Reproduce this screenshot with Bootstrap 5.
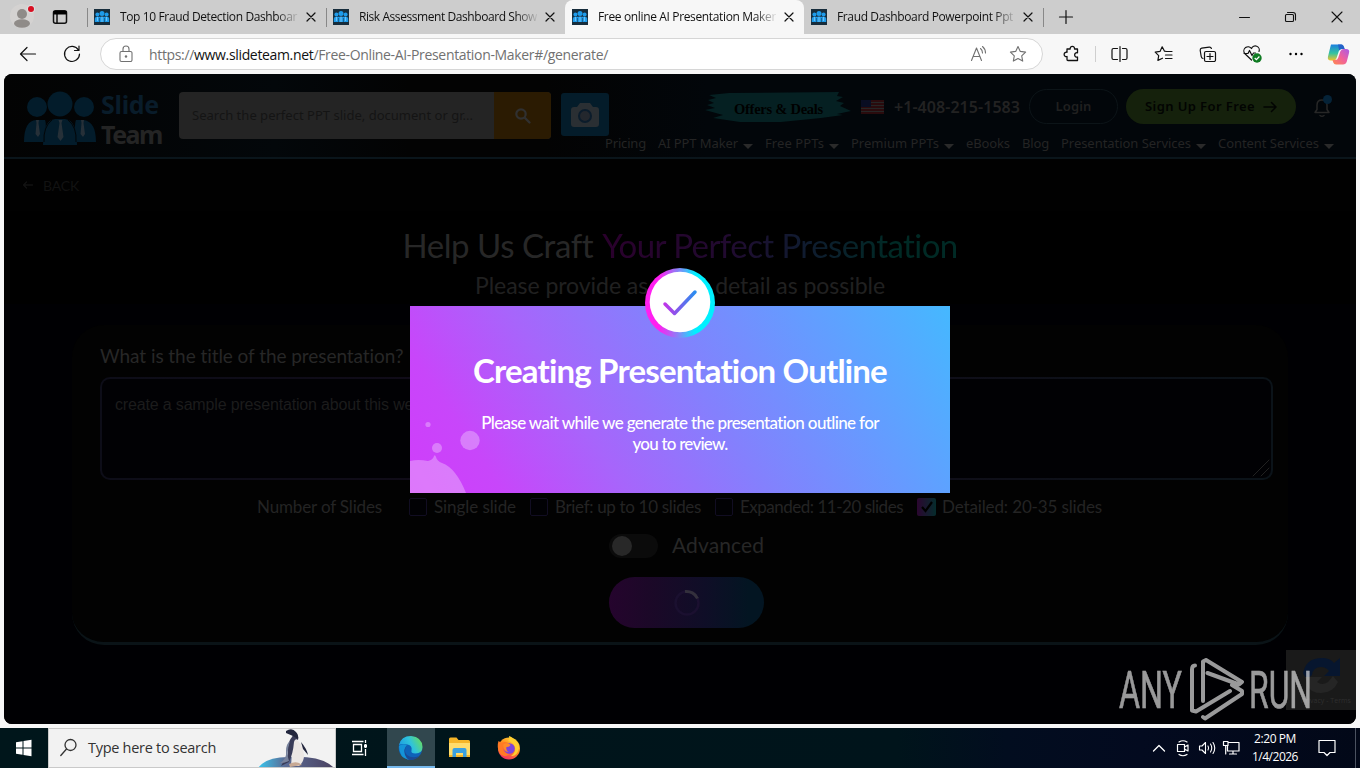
<!DOCTYPE html>
<html lang="en">
<head>
  <meta charset="UTF-8">
  <title>Free online AI Presentation Maker</title>
  <link href="https://cdn.jsdelivr.net/npm/bootstrap@5.3.0/dist/css/bootstrap.min.css" rel="stylesheet">
  <style>
    body {
      width: 1360px;
      height: 768px;
      overflow: hidden;
      background: #f7f7f7;
      font-family: "Open Sans", sans-serif;
      font-size: 12px;
      color: #111;
    }
    svg { display: block; flex: none; }
    .ln { fill: none; stroke: currentColor; stroke-linecap: round; stroke-linejoin: round; }
    [data-w] { display: inline-block; white-space: nowrap; flex: none; }

    /* browser window */
    .tabstrip { height: 34px; background: #cdcdcd; }
    .tabstrip .lead-icons { width: 87px; }
    .tab { width: 239px; height: 34px; padding-left: 6px; border-left: 1px solid transparent; position: relative; }
    .tab.sep::before { content: ""; position: absolute; left: -1px; top: 8px; width: 1px; height: 19px; background: #888; }
    .tab.current { background: #f7f7f7; border-radius: 8px 8px 0 0; }
    .tab.last { width: 46px; }
    .tab-text {
      width: 178px; margin-left: 10px; overflow: hidden; white-space: nowrap;
      -webkit-mask-image: linear-gradient(90deg, #000 156px, transparent 180px);
      mask-image: linear-gradient(90deg, #000 156px, transparent 180px);
    }
    .tab-close { margin-left: 8px; }
    .toolbar { height: 40px; padding-left: 6px; }
    .cell { width: 44px; height: 40px; flex: none; }
    .address { width: 943px; height: 32px; margin: 0 6px; border: 1px solid #d6d6d6; color: #717171; font-size: 14px; }
    .address b { font-weight: 400; color: #111; }
    .address .aloud { margin-right: 22px; }
    .address .star { margin-right: 15px; }
    .bar-sep { width: 1px; height: 16px; margin: 0 2px 0 2px; background: #cfcfcf; }

    /* page */
    .viewport { width: 1352px; height: 650px; margin: 0 4px 4px; border-radius: 8px; overflow: hidden; background: #000; color: #272727; }
    .site-head { height: 85px; padding-left: 20px; background: linear-gradient(90deg, #030303, #03070a 20%, #030303 30%, #030303 40%, #02060a 52%); border-bottom: 2px solid #0a151b; font-family: "Noto Sans", sans-serif; }
    .brand { margin-top: 17px; width: 138px; line-height: 30px; font-size: 25px; font-weight: 700; }
    .brand .words { margin-top: -2px; }
    .brand .top-word { color: #091c2a; }
    .brand .low-word { color: #242424; }
    .finder { width: 372px; height: 47px; margin: 18px 10px 0 17px; border-radius: 4px; overflow: hidden; background: #242424; }
    .finder .hint { width: 315px; padding-left: 13px; font-size: 13px; color: #141414; }
    .finder .go { background: #2b1b02; color: #303030; }
    .cam { width: 48px; height: 43px; margin-top: 19px; border-radius: 3px; background: #041c2a; }
    .head-right { width: 740px; margin-left: -4px; padding-top: 15px; }
    .head-top { height: 35px; padding-left: 100px; }
    .offers { width: 146px; height: 32px; margin-right: 10px; position: relative; }
    .offers span { position: absolute; left: 29px; top: 8px; line-height: 20px; font-family: "Liberation Serif", serif; font-size: 14.5px; font-weight: 700; color: #000; }
    .phone { margin: 0 9px 0 10px; font-size: 16px; font-weight: 600; color: #222; }
    .pill { height: 35px; border-radius: 18px; font-weight: 600; font-size: 13px; }
    .login { width: 89px; margin-right: 8px; border: 1px solid #0c1418; color: #202020; }
    .signup { width: 170px; margin-right: 17px; background: #15210c; color: #020402; }
    .head-nav { height: 20px; margin-top: 10px; gap: 12px; font-size: 13px; color: #242424; }
    .drop::after { content: ""; display: inline-block; margin-left: 5px; vertical-align: -1px; border: 5px solid transparent; border-top-color: #2a2a2a; border-bottom: 0; }

    .content { font-family: Lato, sans-serif; }
    .back { height: 52px; padding-left: 17px; font-size: 14px; color: #121212; background: #010101; }
    .headline { height: 44px; margin-top: 12px; font-size: 33px; line-height: 44px; gap: 9px; font-weight: 400; }
    .tinted { background: linear-gradient(90deg, #2a002c, #210a30 35%, #111a30 55%, #002a25 82%); -webkit-background-clip: text; background-clip: text; color: transparent; }
    .subline { height: 37px; line-height: 36px; font-size: 23px; text-align: center; color: #202020; }
    .lower { background: #000003; padding: 21px 0 0 68px; height: 420px; }
    .maker { width: 1216px; height: 320px; padding: 16px 15px 0 28px; border-radius: 32px; background: #020202; border-bottom: 3px solid #0a1317; }
    .ask { height: 28px; line-height: 29px; font-size: 19px; }
    .answer { height: 103px; margin-top: 8px; padding: 14px 13px; border: 2px solid transparent; border-radius: 10px; font: 16px/24px "Liberation Sans", sans-serif; color: #1c1c1c;
      background: linear-gradient(#010104, #010104) padding-box, linear-gradient(90deg, #0d0d18, #120a18 50%, #0b1319) border-box; }
    .grip { right: 1px; bottom: 1px; color: #222; }
    .choices { height: 24px; margin: 15px 14px 0 0; font-size: 17px; color: #242424; }
    .box { width: 18px; height: 18px; border: 1px solid #110d22; border-radius: 2px; margin: 0 7px 0 14px; background: #010104; flex: none; }
    .box.first { margin-left: 27px; }
    .box.on { width: 19px; margin-right: 6px; border: 0; background: linear-gradient(90deg, #2b0630, #052c2c); }
    .adv { height: 24px; margin-top: 15px; gap: 14px; font-size: 21px; line-height: 22px; }
    .adv [data-w] { margin-top: -2px; }
    .toggle { width: 49px; height: 24px; padding: 2px 3px; border-radius: 12px; background: #0b0b0b; }
    .toggle i { display: block; width: 20px; height: 20px; border-radius: 50%; background: #282828; }
    .make { width: 155px; height: 51px; margin: 19px auto 0; border-radius: 26px; background: linear-gradient(90deg, #25042d, #1c0828 25%, #0f0e27 62%, #031522 90%); }

    /* notice over the page */
    .notice { left: 406px; top: 232px; width: 540px; height: 187px; padding-top: 42px; color: #fff; font-family: Lato, sans-serif;
      background: linear-gradient(57deg, #d03dfa 0%, #c846fa 14%, #a765fb 33%, #8480fd 54%, #659bff 76%, #45b8ff 100%); }
    .notice .big { font-size: 33px; line-height: 44px; font-weight: 700; }
    .notice .note { margin-top: 20px; font-size: 17px; line-height: 21px; font-weight: 500; }
    .ring { left: 235px; top: -38px; }
    .splash { left: 0; bottom: 0; }
    .recaptcha { right: 0; top: 576px; width: 70px; height: 60px; background: #1a1a1a; }
    .recaptcha small { position: absolute; left: 15px; top: 46px; font-size: 7px; color: #2f2f2f; white-space: nowrap; }
    .stamp { left: 1112px; top: 582px; opacity: .6; }

    /* taskbar */
    .taskbar { height: 40px; background: linear-gradient(90deg, #00161b, #00141b 66%, #020d1f 74%, #030a1f 84%, #020818); color: #fff; }
    .tb48 { width: 48px; height: 40px; flex: none; }
    .search { width: 288px; height: 40px; padding-left: 11px; background: #f2f2f2; border: 1px solid #c9c9c9; color: #333; font-size: 14.5px; }
    .edge-slot { width: 48px; margin-left: 3px; background: #31474e; border-bottom: 2px solid #76b9ed; }
    .tray { gap: 8px; }
    .tray svg { overflow: visible; }
    .clock { width: 64px; font-size: 12px; line-height: 18px; margin: 0 3px 0 -4px; }
    .desk-edge { width: 1px; height: 40px; margin-left: 11px; margin-right: 4px; background: #4b5260; }
  </style>
</head>
<body>

<!-- shared drawings -->
<svg width="0" height="0" class="position-absolute">
  <defs>
    <symbol id="fav" viewBox="0 0 16 16">
      <rect width="16" height="16" fill="#172d3c"/>
      <g fill="#1e9bea"><circle cx="8" cy="4.500" r="2.500"/><circle cx="3.400" cy="5.500" r="2"/><circle cx="12.600" cy="5.500" r="2"/><path d="M.8 13V9.800q0-2 2.200-2h10q2.200 0 2.200 2V13z"/></g>
      <path d="M3.400 8v4M8 7.500V13M12.600 8v4" stroke="#8bd0fa" stroke-width=".8"/>
      <path d="M5.500 9v5M10.500 9v5" stroke="#172d3c" stroke-width=".5"/>
    </symbol>
    <symbol id="x" viewBox="0 0 10 10"><path class="ln" stroke-width="1.200" d="M1 1l8 8M9 1L1 9"/></symbol>
    <linearGradient id="gTick" x1="0" x2="1"><stop offset="0" stop-color="#c035e8"/><stop offset="1" stop-color="#2a8df0"/></linearGradient>
    <linearGradient id="gRing" x1="0" x2="1"><stop offset=".2" stop-color="#ff1ff0"/><stop offset=".5" stop-color="#7c8df8"/><stop offset=".72" stop-color="#00f0ff"/></linearGradient>
    <linearGradient id="gCopA" x1="0" y1="0" x2="0" y2="1"><stop offset="0" stop-color="#1a7fe0"/><stop offset=".55" stop-color="#35c3a0"/><stop offset="1" stop-color="#f3c32c"/></linearGradient>
    <linearGradient id="gCopB" x1="1" y1="0" x2="0" y2="1"><stop offset="0" stop-color="#a85be8"/><stop offset=".5" stop-color="#f0609c"/><stop offset="1" stop-color="#ff8a4c"/></linearGradient>
    <linearGradient id="gEdge" x1="0" y1=".6" x2="1" y2=".2"><stop offset="0" stop-color="#1c9be0"/><stop offset=".5" stop-color="#2fc3dc"/><stop offset="1" stop-color="#6ade59"/></linearGradient>
    <linearGradient id="gFox" x1=".8" y1="0" x2=".2" y2="1"><stop offset="0" stop-color="#ffe03a"/><stop offset=".45" stop-color="#ff8a1f"/><stop offset="1" stop-color="#f2246b"/></linearGradient>
    <linearGradient id="gIce" x1="0" x2="1"><stop offset="0" stop-color="#38c6ee"/><stop offset=".35" stop-color="#5a6c96"/><stop offset="1" stop-color="#4b4160"/></linearGradient>
  </defs>
</svg>

<!-- Tabs -->
<div class="tabstrip d-flex align-items-center">
  <div class="lead-icons d-flex align-items-center">
    <svg width="44" height="34"><circle cx="22" cy="16" r="12" fill="#d4d2d1"/><circle cx="22" cy="14" r="5" fill="#8f8b88"/><ellipse cx="22" cy="23.500" rx="8" ry="4.200" fill="#8f8b88"/><circle cx="31" cy="9" r="4" fill="#dedede"/><circle cx="31" cy="9" r="3" fill="#d80f22"/></svg>
    <svg width="32" height="34"><path class="ln" stroke-width="1.500" d="M11.500 10.700h9a2 2 0 0 1 2 2v8.600a2 2 0 0 1-2 2h-9a2 2 0 0 1-2-2v-8.600a2 2 0 0 1 2-2zM13 14v9"/><path d="M9.500 11h13v3.500h-13z"/></svg>
  </div>
  <div class="tab sep d-flex align-items-center"><svg width="16" height="16"><use href="#fav"/></svg><div class="tab-text"><span data-w="177">Top 10 Fraud Detection Dashboar</span></div><svg class="tab-close" width="10" height="10"><use href="#x"/></svg></div>
  <div class="tab sep d-flex align-items-center"><svg width="16" height="16"><use href="#fav"/></svg><div class="tab-text"><span data-w="178">Risk Assessment Dashboard Show</span></div><svg class="tab-close" width="10" height="10"><use href="#x"/></svg></div>
  <div class="tab current d-flex align-items-center"><svg width="16" height="16"><use href="#fav"/></svg><div class="tab-text"><span data-w="178">Free online AI Presentation Maker</span></div><svg class="tab-close" width="10" height="10"><use href="#x"/></svg></div>
  <div class="tab d-flex align-items-center"><svg width="16" height="16"><use href="#fav"/></svg><div class="tab-text"><span data-w="176">Fraud Dashboard Powerpoint Ppt</span></div><svg class="tab-close" width="10" height="10"><use href="#x"/></svg></div>
  <div class="tab sep last d-flex align-items-center"><svg class="ms-2" width="16" height="16"><path class="ln" stroke-width="1.200" d="M8 1.500v13M1.500 8h13"/></svg></div>
  <div class="d-flex align-items-center ms-auto">
    <svg width="46" height="34"><path class="ln" stroke-width="1" d="M17.500 17.500h10"/></svg>
    <svg width="46" height="34"><path class="ln" stroke-width="1.100" d="M18.500 14.500h6a1 1 0 0 1 1 1v5a1 1 0 0 1-1 1h-6a1 1 0 0 1-1-1v-5a1 1 0 0 1 1-1zM19.500 12.500h5.500a2.500 2.500 0 0 1 2.500 2.500v5"/></svg>
    <svg width="46" height="34"><path class="ln" stroke-width="1.100" d="M18 12l10 10M28 12l-10 10"/></svg>
  </div>
</div>

<!-- Toolbar -->
<div class="toolbar d-flex align-items-center">
  <svg class="cell"><path class="ln" stroke-width="1.200" d="M29.500 20h-15M21 13.500L14.500 20l6.500 6.500"/></svg>
  <svg class="cell"><path class="ln" stroke-width="1.200" d="M28.500 16.200A7.500 7.500 0 1 0 29.500 20M29 12v4.500h-4.500"/></svg>
  <div class="address d-flex align-items-center rounded-pill bg-white">
    <svg width="48" height="30"><path class="ln" stroke-width="1.100" d="M20.500 12.500h9a1.500 1.500 0 0 1 1.500 1.500v7a1.500 1.500 0 0 1-1.500 1.500h-9a1.500 1.500 0 0 1-1.500-1.500v-7a1.500 1.500 0 0 1 1.500-1.500zM22 12.500V10a3 3 0 0 1 6 0v2.500"/><circle cx="25" cy="17.500" r="1.200" fill="currentColor"/></svg>
    <span data-w="459">https://<b>www.slideteam.net</b>/Free-Online-AI-Presentation-Maker#/generate/</span>
    <svg class="aloud ms-auto" width="18" height="18"><path class="ln" stroke-width="1.100" d="M2.500 15.500L7.500 3l5 12.500M4.300 11.500h6.400M11.500 3.500q2 1.500 2 4.500M13.500 1.500q3 2.500 3 6.500"/></svg>
    <svg class="star" width="18" height="18"><path class="ln" stroke-width="1.100" d="M9 1.500l2.300 4.900 5.300.7-3.900 3.700 1 5.300L9 13.500l-4.700 2.600 1-5.300L1.400 7.100l5.300-.7z"/></svg>
  </div>
  <svg class="cell"><path class="ln" stroke-width="1.300" d="M18 15h3.200a2.200 2.200 0 1 1 4.300 0h3v3.800a2.200 2.200 0 1 0 0 4.200v3.500H19a1 1 0 0 1-1-1v-3a2.200 2.200 0 1 1 0-4.200z"/></svg>
  <div class="bar-sep"></div>
  <svg class="cell"><path class="ln" stroke-width="1.200" d="M19.500 14.500h-4A1.500 1.500 0 0 0 14 16v8a1.500 1.500 0 0 0 1.500 1.500h4M24.500 14.500h3A1.500 1.500 0 0 1 29 16v8a1.500 1.500 0 0 1-1.500 1.500h-3M22 12.500v15"/></svg>
  <svg class="cell"><path class="ln" stroke-width="1.200" d="M24.500 17.500l-2-.3-2.300-4.400-2.200 4.600-4.800.7 3.500 3.500-.8 4.800 4.600-2.200M25 17.500h5M23.500 21H30M23.500 24.500H30"/></svg>
  <svg class="cell"><path class="ln" stroke-width="1.200" d="M20 17.500h8a1.500 1.500 0 0 1 1.500 1.500v7a1.500 1.500 0 0 1-1.500 1.500h-8a1.500 1.500 0 0 1-1.500-1.500v-7a1.500 1.500 0 0 1 1.500-1.500zM24 19.500v6M21 22.500h6M17 24.500q-1.500-.3-1.800-2l-1-6q-.2-2 1.500-2.300l7.500-1q1.700-.2 2.200 1.300"/></svg>
  <svg class="cell"><path class="ln" stroke-width="1.200" d="M21.500 26l-6.800-6.500a4 4 0 0 1 6.800-5 4 4 0 0 1 7.500 3M14 19.500h4l1.500-3 2.500 5 1.500-2.500h2"/><circle cx="27" cy="24" r="4.700" fill="#0f7b22"/><path d="M24.700 24l1.700 1.700 3-3.200" fill="none" stroke="#fff" stroke-width="1.200"/></svg>
  <svg class="cell"><circle cx="16.500" cy="20" r="1.200"/><circle cx="22" cy="20" r="1.200"/><circle cx="27.500" cy="20" r="1.200"/></svg>
  <svg width="41" height="40"><path fill="url(#gCopA)" d="M13 10.500h10q2 0 2.700 2l.8 2.500h-3q-2 0-2.700 2.200l-2.300 7q-.8 2.300-3 2.300H13q-4 0-3-4l2.200-9q.8-3 .8-3z"/><path fill="url(#gCopB)" d="M26 15h2q4 0 3 4l-2.200 8.500q-.9 3-3.800 3h-7q-2 0-2.700-2l-.8-2.500h3q2 0 2.700-2.200l2.200-6.500Q23.500 15 26 15z"/><path fill="#2461c8" d="M20 10.500h4q1.500.5 2 2.500l.7 2h-3q-1.800 0-2.500 1.500z"/></svg>
</div>

<!-- Page -->
<main class="viewport position-relative">
  <header class="site-head d-flex align-items-start">
    <div class="brand d-flex justify-content-between">
      <svg width="72" height="54"><g fill="#031c2b"><circle cx="36" cy="13" r="12.500"/><circle cx="13" cy="16" r="10"/><circle cx="60" cy="16" r="10"/><path d="M0 51q0-21 12-22h9q2 4-1 22zM52 51q-2-18 0-22h8q12 2 12 22z"/><path d="M19 54q0-25 12-26h10q12 1 12 26z"/></g><g fill="#263038"><path d="M34.500 29h4l-1 3 2 14-3 4-3-4 2-14zM12 29h3l-.5 3 1.500 11-2 3-2.500-3 1-11zM57 29h3l-.5 3 1.500 11-2 3-2.500-3 1-11z"/></g><path fill="none" stroke="#020608" d="M20 51q-1-15 8-22M52 51q1-15-8-22"/></svg>
      <div class="words"><div><span class="top-word" data-w="58">Slide</span></div><div><span class="low-word" data-w="61">Team</span></div></div>
    </div>
    <div class="finder d-flex align-items-stretch">
      <div class="hint d-flex align-items-center"><span data-w="281">Search the perfect PPT slide, document or gr...</span></div>
      <div class="go flex-grow-1 d-flex align-items-center justify-content-center"><svg width="18" height="18"><circle class="ln" cx="7" cy="7" r="4.700" stroke-width="2.200"/><path class="ln" d="M11 11l4.500 4.500" stroke-width="2.400"/></svg></div>
    </div>
    <div class="cam d-flex align-items-center justify-content-center"><svg width="28" height="26"><path fill="#2a2f33" d="M3 5h3l3-4h10l3 4h3q3 0 3 3v14q0 3-3 3H3q-3 0-3-3V8q0-3 3-3z"/><circle cx="14" cy="14" r="6" fill="#23272d" stroke="#0b1c2b" stroke-width="2"/></svg></div>
    <div class="head-right">
      <div class="head-top d-flex align-items-center">
        <div class="offers"><svg width="146" height="32"><path fill="#052022" d="M4 4l20-2 110-1-2 4 6 1-7 4 8 2-4 3 11 5-14 3 6 1-22 3-40 4H35L8 27l10-3-18-5 10-2-8-3 7-2-6-3 8-2z"/></svg><span data-w="89">Offers &amp; Deals</span></div>
        <svg width="23" height="14"><path fill="#2a0b0d" d="M0 0h23v14H0z"/><path stroke="#262626" d="M0 2.500h23M0 5.500h23M0 8.500h23M0 11.500h23"/><path fill="#090d22" d="M0 0h10v7H0z"/></svg>
        <span class="phone" data-w="126">+1-408-215-1583</span>
        <div class="pill login d-flex align-items-center justify-content-center"><span data-w="36">Login</span></div>
        <div class="pill signup d-flex align-items-center justify-content-center"><span data-w="110">Sign Up For Free</span><svg class="ms-2" width="14" height="12"><path class="ln" stroke-width="1.500" d="M1 6h12M8.500 1.500L13 6l-4.500 4.500"/></svg></div>
        <svg width="21" height="24"><path class="ln" stroke-width="1.500" d="M2 17.500h14l-2-3V10q0-5-5-5t-5 5v4.500zM7 20.500q2 1.500 4 0"/><circle cx="14.500" cy="4.500" r="4.500" fill="#052338"/></svg>
      </div>
      <nav class="head-nav d-flex align-items-center">
        <span><span data-w="41">Pricing</span></span>
        <span class="drop text-nowrap"><span data-w="80">AI PPT Maker</span></span>
        <span class="drop text-nowrap"><span data-w="59">Free PPTs</span></span>
        <span class="drop text-nowrap"><span data-w="88">Premium PPTs</span></span>
        <span><span data-w="44">eBooks</span></span>
        <span><span data-w="27">Blog</span></span>
        <span class="drop text-nowrap"><span data-w="130">Presentation Services</span></span>
        <span class="drop text-nowrap"><span data-w="101">Content Services</span></span>
      </nav>
    </div>
  </header>

  <div class="content">
    <div class="back d-flex align-items-center"><svg class="me-2" width="14" height="12"><path class="ln" stroke-width="1.300" d="M11.500 6h-9M5.500 3l-3 3 3 3"/></svg><span data-w="36">BACK</span></div>
    <div class="headline d-flex justify-content-center"><span data-w="190">Help Us Craft</span><span class="tinted" data-w="356">Your Perfect Presentation</span></div>
    <div class="subline"><span data-w="410">Please provide as much detail as possible</span></div>
    <div class="lower">
      <section class="maker">
        <div class="ask"><span data-w="304">What is the title of the presentation?</span></div>
        <div class="answer position-relative"><span data-w="307">create a sample presentation about this web</span><svg class="grip position-absolute" width="18" height="18"><path class="ln" d="M1 17L17 1M9 17l8-8"/></svg></div>
        <div class="choices d-flex align-items-center justify-content-center">
          <span data-w="125">Number of Slides</span>
          <span class="box first"></span><span data-w="82">Single slide</span>
          <span class="box"></span><span data-w="146">Brief: up to 10 slides</span>
          <span class="box"></span><span data-w="163">Expanded: 11-20 slides</span>
          <span class="box on"><svg width="19" height="18"><path fill="none" stroke="#000" stroke-width="2.200" d="M5 9l3.500 4L15 4"/></svg></span><span data-w="160">Detailed: 20-35 slides</span>
        </div>
        <div class="adv d-flex align-items-center justify-content-center"><span class="toggle"><i></i></span><span data-w="92">Advanced</span></div>
        <div class="make d-flex align-items-center justify-content-center"><svg width="28" height="28"><circle cx="14" cy="14" r="11.500" fill="none" stroke="#1b1030" stroke-width="2.500"/><path fill="none" stroke="#33303c" stroke-width="3" d="M12 2.500a12 12 0 0 1 12.500 7"/></svg></div>
      </section>
    </div>
  </div>

  <!-- reCAPTCHA badge -->
  <div class="recaptcha position-absolute">
    <svg width="70" height="60"><path fill="#07162f" d="M17 23Q20 8 36 8q8 0 12 5l6-5v18H38l5-5q-3-4-8-4-8 0-9 8-5 5-8 0z"/><path fill="#252525" d="M19 27h17l-5 5q5 4 11 0l5-6 5 6q-5 11-17 11-9 0-13-6z"/></svg>
    <small data-w="50">Privacy - Terms</small>
  </div>

  <!-- Notice -->
  <div class="notice position-absolute text-center">
    <svg class="ring position-absolute" width="70" height="72"><ellipse cx="35" cy="35" rx="35" ry="35" fill="url(#gRing)"/><circle cx="35" cy="34" r="30.300" fill="#fff"/><path fill="none" stroke="url(#gTick)" stroke-width="3.500" stroke-linecap="round" stroke-linejoin="round" d="M20 36L29.500 45.500 50 24"/></svg>
    <svg class="splash position-absolute" width="75" height="75"><g fill="#fff" fill-opacity=".3"><path d="M0 43q8-2 18 0 5-1 6-5 1-2 2 1 1 4 6 6 14 5 24 30H0z"/><circle cx="60" cy="22.500" r="9.700"/><circle cx="27" cy="30" r="5"/><circle cx="18" cy="6.500" r="2.600"/></g></svg>
    <div class="big"><span data-w="415">Creating Presentation Outline</span></div>
    <div class="note"><span data-w="398">Please wait while we generate the presentation outline for</span><br><span data-w="95">you to review.</span></div>
  </div>

  <!-- Recording stamp -->
  <svg class="stamp position-absolute" width="200" height="66" fill="#fff" stroke="#fff" stroke-width=".6" font-family="Roboto, sans-serif" font-size="52">
    <text x="3" y="52" textLength="63" lengthAdjust="spacingAndGlyphs">ANY</text>
    <text x="133" y="52" textLength="63" lengthAdjust="spacingAndGlyphs">RUN</text>
    <g fill="none" stroke-width="4" stroke-linejoin="round" stroke-linecap="round"><path d="M87 45V5.500l3-1.500L126 26l-3 2.500L91.500 17M79 9.500q-3 0-3 4V54.500l4 1L114 35M87 61l2 1.500L126 38v-3l-10-6"/></g>
  </svg>
</main>

<!-- Taskbar -->
<footer class="taskbar d-flex align-items-center">
  <svg class="tb48"><path fill="#fff" d="M16 14.200l6.500-1v6.300H16zM23.500 13l8-1.200v7.700h-8zM16 20.500h6.500v6.300l-6.500-1zM23.500 20.500h8v7.700l-8-1.200z"/></svg>
  <div class="search d-flex align-items-center">
    <svg class="me-2" width="20" height="20"><circle class="ln" cx="10.500" cy="7" r="5.500" stroke-width="1.300"/><path class="ln" stroke-width="1.300" d="M6.500 11L.8 17.500"/></svg>
    <span data-w="128">Type here to search</span>
    <svg class="ms-auto align-self-end" width="77" height="38"><path fill="url(#gIce)" d="M0 39Q8 28 30 28q34-2 46 11z"/><path fill="#ece7e4" d="M35 9q10 4 11 17 0 7-5 11h-8z"/><path fill="#3a3c58" d="M28 3q5-3 9 0 4 3 3 8-3-2-4 2-1 12-5 20l-8 4 7-12q-1-12 4-17l1-2z"/><path fill="#77829c" d="M32 12q-4 12-1 20-8 3-9 2 7-4 6-12 0-7 4-10z"/><path fill="#23273e" d="M28 2q6-4 10 1 3 3 2 7l-5-3-7-3zM43 13q6 7 7 13l-5-6z"/><path fill="#c8a994" d="M31 35q8-4 13 1l-12 2z"/></svg>
  </div>
  <svg class="tb48"><path fill="none" stroke="#fff" stroke-width="1.300" d="M16 13.500h11.500M16 26.500h11.500M17.500 16.500h8v7h-8zM29.500 12v3M29.500 16v4M29.500 21v7"/><path fill="#fff" d="M28 16.500h3v3h-3z"/></svg>
  <svg class="edge-slot" height="40"><circle cx="23.500" cy="20" r="11.800" fill="#0f62b8"/><path fill="url(#gEdge)" d="M12 17q2-9 12-9 11 1 11.500 11 0 6-7 6.500-5 0-4-3 1-5-4-6-6-1-8.500.5z"/><path fill="#1b4a94" d="M20 17q-4 6 0 10 5 4 12 1-5 6-13 3-7-5-3-12 2-2 4-2z"/><path fill="#1493d8" d="M12 18q3-3 8-1-4 4-2 10 1 3 4 5Q12 30 12 18z"/></svg>
  <svg class="tb48 ms-1"><path fill="#f5b528" d="M10 11q0-1.500 1.500-1.500h6l2 2.500h10q1.500 0 1.500 1.500V29H10z"/><path fill="#ffdc6b" d="M10 15h21v12H10z"/><path fill="#3aa0e0" d="M13.500 22q0-2 2-2h10q2 0 2 2v7h-3.500v-4h-7v4h-3.500z"/></svg>
  <svg class="tb48"><circle cx="22" cy="20.500" r="11" fill="url(#gFox)"/><path fill="#ffcf30" d="M22 8q4 1 6 5 4 2 4 7-2 9-8 8 5-3 4-9-2-5-7-6 2-2 1-5z"/><path fill="#ff7a24" d="M11.500 13l3 2q3-2 7 0l-6 4q0 6 7 7-6 5-10-1-3-6-1-12z"/><circle cx="22.500" cy="20.500" r="5.300" fill="#7c44dc"/><path fill="#ff8a28" d="M16.500 16q4-2 7 1-1 2-4 2-1 3 2 5-6-1-5-8z"/></svg>
  <div class="tray d-flex align-items-center ms-auto">
    <svg width="16" height="18"><path class="ln" d="M2.500 12L8 6.500l5.500 5.500" stroke-width="1.300"/></svg>
    <svg width="16" height="18"><path class="ln" d="M2.500 5.500h7v7h-7zM9.500 8l3.500-2v6l-3.500-2M4 3q4-2.500 8 0M4 15.500q4 2.500 8 0" stroke-width="1.200"/></svg>
    <svg width="16" height="18"><path class="ln" d="M.5 7H3l3.500-3.500v11L3 11H.5zM9 7q1.200 2 0 4M11.500 5q2.500 4 0 8M14 3.500q3.500 5.500 0 11" stroke-width="1.100"/></svg>
    <svg width="16" height="18"><path class="ln" d="M5.500 3.500H16v8.500H4.500V6.500M10 12v3M6.500 15h7M.5 2.500H5v4H.5zM2.700 6.500V15" stroke-width="1.200"/></svg>
    <div class="clock text-center"><span data-w="42">2:20 PM</span><br><span data-w="46">1/4/2026</span></div>
    <svg width="18" height="18"><path class="ln" d="M1 1.500h16v12h-5l-3 3-3-3H1z" stroke-width="1.200"/></svg>
    <div class="desk-edge"></div>
  </div>
</footer>

<script src="https://cdn.jsdelivr.net/npm/bootstrap@5.3.0/dist/js/bootstrap.bundle.min.js"></script>
<script>
  // track each label out (or in) to the width it is set to
  document.querySelectorAll('[data-w]').forEach(el => {
    const natural = el.getBoundingClientRect().width;
    const target = Number(el.dataset.w);
    el.style.letterSpacing = ((target - natural) / el.textContent.length).toFixed(3) + 'px';
  });
</script>
</body>
</html>
